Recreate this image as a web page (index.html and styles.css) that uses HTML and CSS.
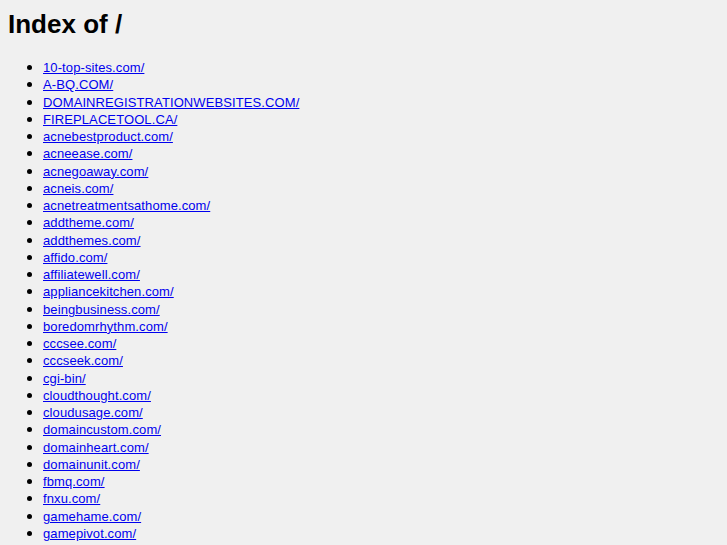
FILE: index.html
```html
<!DOCTYPE html>
<html>
<head>
    <meta charset="UTF-8">
    <title>Index of /</title>
    <link rel="stylesheet" href="styles.css">
</head>
<body>
<h1>Index of /</h1>
<ul>
    <li><a href="/10-top-sites.com/">10-top-sites.com/</a></li>
    <li><a href="/A-BQ.COM/">A-BQ.COM/</a></li>
    <li><a href="/DOMAINREGISTRATIONWEBSITES.COM/">DOMAINREGISTRATIONWEBSITES.COM/</a></li>
    <li><a href="/FIREPLACETOOL.CA/">FIREPLACETOOL.CA/</a></li>
    <li><a href="/acnebestproduct.com/">acnebestproduct.com/</a></li>
    <li><a href="/acneease.com/">acneease.com/</a></li>
    <li><a href="/acnegoaway.com/">acnegoaway.com/</a></li>
    <li><a href="/acneis.com/">acneis.com/</a></li>
    <li><a href="/acnetreatmentsathome.com/">acnetreatmentsathome.com/</a></li>
    <li><a href="/addtheme.com/">addtheme.com/</a></li>
    <li><a href="/addthemes.com/">addthemes.com/</a></li>
    <li><a href="/affido.com/">affido.com/</a></li>
    <li><a href="/affiliatewell.com/">affiliatewell.com/</a></li>
    <li><a href="/appliancekitchen.com/">appliancekitchen.com/</a></li>
    <li><a href="/beingbusiness.com/">beingbusiness.com/</a></li>
    <li><a href="/boredomrhythm.com/">boredomrhythm.com/</a></li>
    <li><a href="/cccsee.com/">cccsee.com/</a></li>
    <li><a href="/cccseek.com/">cccseek.com/</a></li>
    <li><a href="/cgi-bin/">cgi-bin/</a></li>
    <li><a href="/cloudthought.com/">cloudthought.com/</a></li>
    <li><a href="/cloudusage.com/">cloudusage.com/</a></li>
    <li><a href="/domaincustom.com/">domaincustom.com/</a></li>
    <li><a href="/domainheart.com/">domainheart.com/</a></li>
    <li><a href="/domainunit.com/">domainunit.com/</a></li>
    <li><a href="/fbmq.com/">fbmq.com/</a></li>
    <li><a href="/fnxu.com/">fnxu.com/</a></li>
    <li><a href="/gamehame.com/">gamehame.com/</a></li>
    <li><a href="/gamepivot.com/">gamepivot.com/</a></li>
</ul>
</body>
</html>
```

FILE: styles.css
```css
body {
    margin: 8px;
    background-color: #f0f0f0;
    color: #000;
    font-family: "Liberation Sans", Arial, sans-serif;
    font-size: 13px;
}

h1 {
    font-size: 26px;
    font-weight: bold;
    margin: 1px 0 18px;
}

ul {
    margin: 0;
    padding-left: 35px;
}

li {
    height: 17.25px;
    line-height: 17.25px;
    letter-spacing: 0.1px;
}

li::marker {
    font-size: 15px;
}

a {
    color: #0000ee;
}
```
